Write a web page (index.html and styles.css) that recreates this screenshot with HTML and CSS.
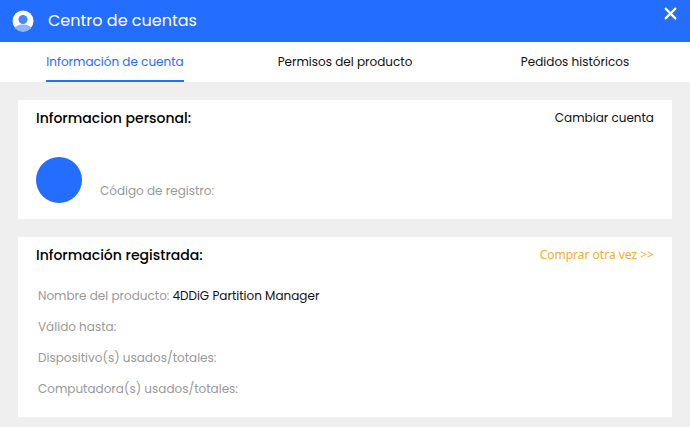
FILE: index.html
```html
<!DOCTYPE html>
<html lang="es">
<head>
    <meta charset="UTF-8" />
    <meta name="viewport" content="width=device-width, initial-scale=1.0" />
    <title>Centro de cuentas</title>
    <link rel="stylesheet" href="styles.css">
</head>
<body>
    <header class="titlebar">
        <svg class="logo" viewBox="0 0 22 22" aria-hidden="true">
            <defs>
                <clipPath id="disc"><circle cx="11" cy="11" r="10.5" /></clipPath>
            </defs>
            <circle cx="11" cy="11" r="10.5" fill="#fff" />
            <g clip-path="url(#disc)">
                <path d="M2 22v-3c1-3 4-4.500 9-4.500s8 1.500 9 4.500v3z" fill="#8db4ff" />
                <circle cx="11" cy="9.500" r="4.500" fill="#4a86ff" />
            </g>
        </svg>
        <h1>Centro de cuentas</h1>
        <button class="close" type="button" aria-label="Cerrar">
            <svg viewBox="0 0 12 12" aria-hidden="true">
                <path d="M1.500 1.500l9 9M10.500 1.500l-9 9" stroke="#fff" stroke-width="2" stroke-linecap="round" />
            </svg>
        </button>
    </header>

    <nav class="tabs">
        <a class="tab active" href="#cuenta">Información de cuenta</a>
        <a class="tab" href="#permisos">Permisos del producto</a>
        <a class="tab" href="#pedidos">Pedidos históricos</a>
    </nav>

    <main class="content" id="cuenta">
        <section class="card">
            <div class="card-head">
                <h2>Informacion personal:</h2>
                <a class="switch" href="#cambiar">Cambiar cuenta</a>
            </div>
            <div class="profile">
                <div class="avatar"></div>
                <p class="code">Código de registro:</p>
            </div>
        </section>

        <section class="card">
            <div class="card-head">
                <h2>Información registrada:</h2>
                <a class="buy" href="#comprar">Comprar otra vez &gt;&gt;</a>
            </div>
            <dl class="details">
                <div><dt>Nombre del producto:</dt><dd>4DDiG Partition Manager</dd></div>
                <div><dt>Válido hasta:</dt><dd></dd></div>
                <div><dt>Dispositivo(s) usados/totales:</dt><dd></dd></div>
                <div><dt>Computadora(s) usados/totales:</dt><dd></dd></div>
            </dl>
        </section>
    </main>
</body>
</html>
```

FILE: styles.css
```css
* {
    box-sizing: border-box;
}
body {
    margin: 0;
    font-family: Poppins, Inter, sans-serif;
    font-size: 12px;
    line-height: 18px;
    color: #111;
    background: #efefef;
}
h1, h2, p, dl, dd {
    margin: 0;
}
a {
    color: inherit;
    text-decoration: none;
}
.titlebar {
    display: flex;
    align-items: center;
    gap: 14px;
    height: 42px;
    padding: 0 13px 0 12px;
    color: #fff;
    background: #236dff;
}
.logo {
    width: 22px;
    height: 22px;
}
h1 {
    flex: 1;
    font-size: 16px;
    font-weight: 400;
    line-height: 24px;
}
.close {
    align-self: flex-start;
    display: flex;
    margin-top: 7px;
    padding: 0;
    border: none;
    background: none;
    cursor: pointer;
}
.close svg {
    width: 13px;
    height: 13px;
}
.tabs {
    display: grid;
    grid-template-columns: repeat(3, 1fr);
    justify-items: center;
    height: 40px;
    background: #fff;
}
.tab {
    padding-top: 11px;
    border-bottom: 2px solid transparent;
}
.tab.active {
    color: #236dff;
    border-color: #236dff;
}
.content {
    display: flex;
    flex-direction: column;
    gap: 18px;
    padding: 18px 18px 10px;
}
.card {
    padding: 7px 18px 16px;
    background: #fff;
}
.card-head {
    display: flex;
    justify-content: space-between;
    align-items: center;
    line-height: 22px;
}
h2 {
    font-size: 14px;
    font-weight: 500;
    color: #000;
}
.buy {
    font-family: "Segoe UI", "Noto Sans", sans-serif;
    color: #f9ab1c;
}
.profile {
    display: flex;
    align-items: flex-end;
    gap: 18px;
    margin-top: 28px;
}
.avatar {
    width: 46px;
    height: 46px;
    border-radius: 50%;
    background: #236dff;
}
.code {
    padding-bottom: 3px;
    color: #999;
}
.details {
    display: grid;
    gap: 13px;
    padding: 21px 2px 3px;
}
.details div {
    display: flex;
    gap: 3px;
}
.details dt {
    color: #999;
}
```
